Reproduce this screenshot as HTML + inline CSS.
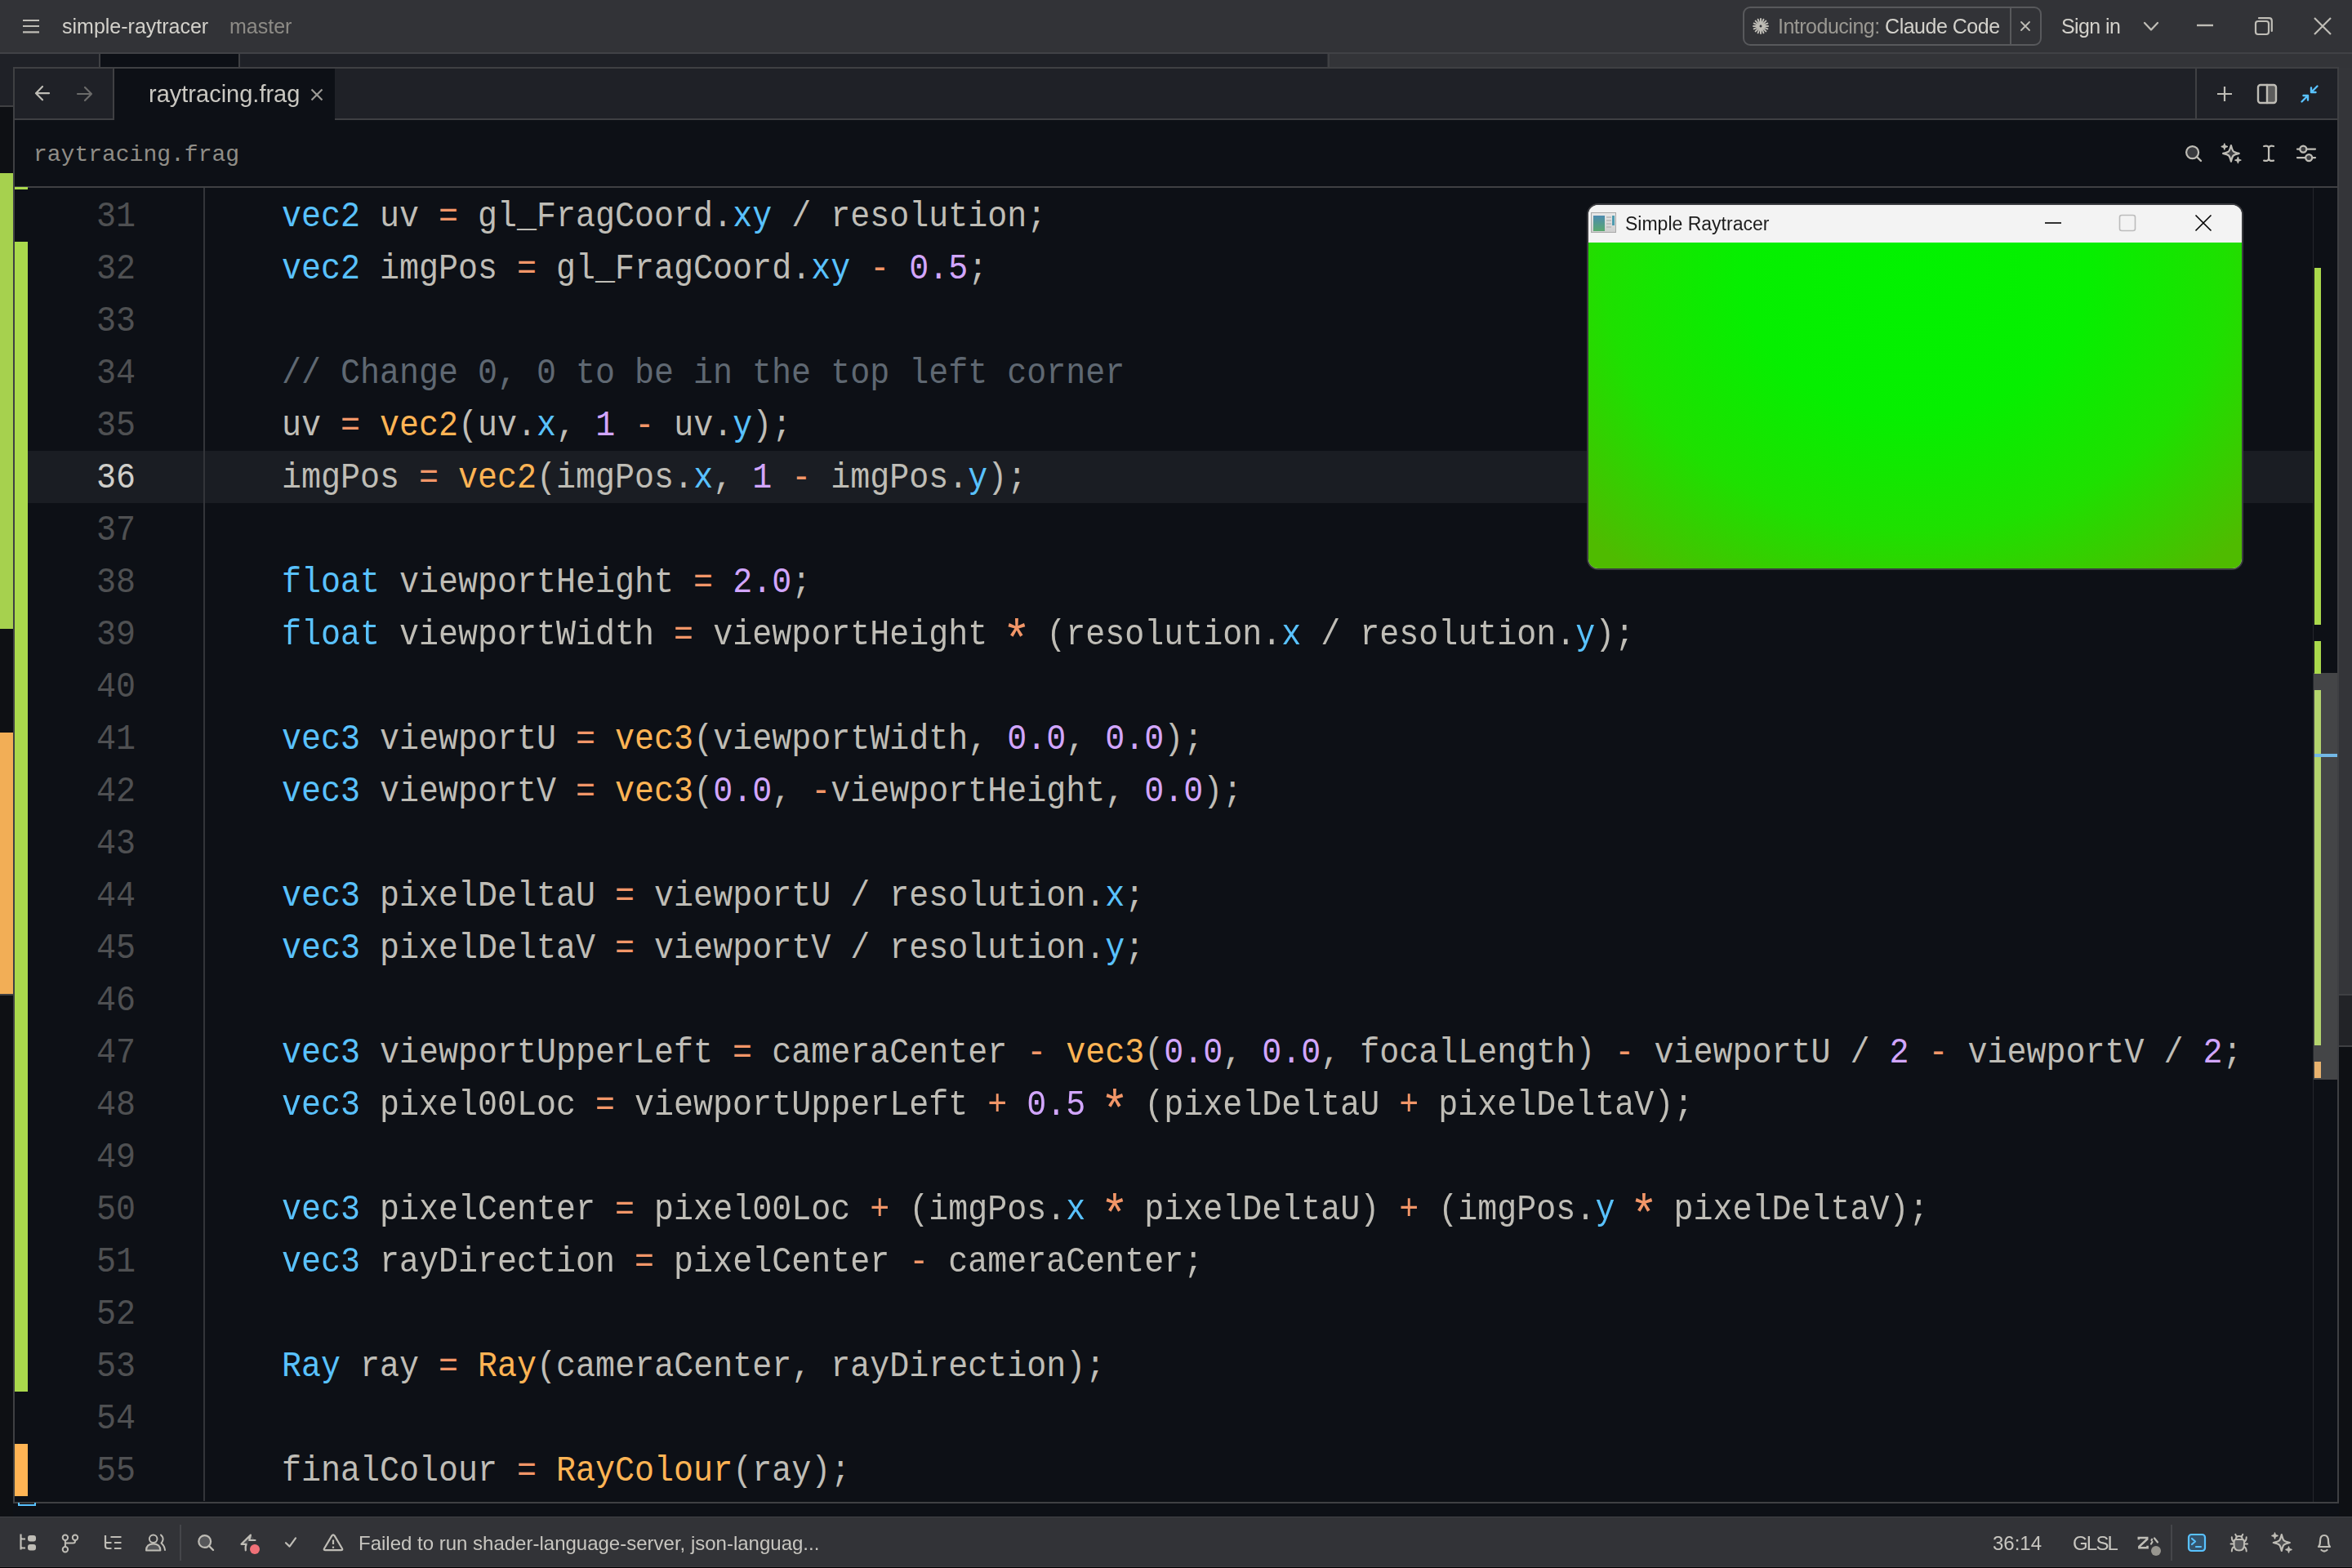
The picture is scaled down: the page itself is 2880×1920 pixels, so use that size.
<!DOCTYPE html><html><head><meta charset="utf-8"><style>*{margin:0;padding:0;box-sizing:border-box}
html,body{width:2880px;height:1920px;overflow:hidden;background:#0d1016}
body{position:relative;font-family:"Liberation Sans",sans-serif;color:#bfbdb6}
.a{position:absolute}
svg.a{overflow:visible}
.ui{font-family:"Liberation Sans",sans-serif;white-space:pre;line-height:1;transform:translateZ(0)}
.mono{font-family:"Liberation Mono",monospace;white-space:pre;line-height:1}
#title{left:0;top:0;width:2880px;height:66px;background:#323337;border-bottom:2px solid #414246}
#proj{left:76px;top:20px;font-size:25px;color:#d3d1cb}
#branch{left:281px;top:20px;font-size:25px;color:#8d8b86}
#claude{left:2134px;top:8px;width:366px;height:48px;border:2px solid #58595c;border-radius:9px}
#claudediv{left:325px;top:0;width:2px;height:44px;background:#58595c}
#intro{letter-spacing:-0.5px;left:2177px;top:20px;font-size:25px;color:#d3d1cb}
#signin{letter-spacing:-0.6px;left:2524px;top:20px;font-size:25px;color:#d3d1cb}

#bgtabs{left:0;top:66px;width:2880px;height:17px;background:linear-gradient(90deg,#1f2127 0,#1f2127 1625px,#3f4043 1626px,#3f4043 1628px,#333438 1628px)}
#bgactive{left:121px;top:66px;width:173px;height:17px;background:#0d1016;border-left:2px solid #3f4043;border-right:2px solid #3f4043}
#lstrip{left:0;top:83px;width:16px;height:1774px;background:linear-gradient(#1f2127 0,#1f2127 46px,#3f4043 46px,#3f4043 48px,#0e1014 48px,#0e1014 129px,#a6d14e 129px,#a6d14e 687px,#0e1014 687px,#0e1014 814px,#f2ae56 814px,#f2ae56 1134px,#3f4043 1134px,#3f4043 1136px,#0e1014 1136px)}
#rstrip{left:2864px;top:83px;width:16px;height:1774px;background:linear-gradient(#343539 0,#343539 1134px,#3f4043 1134px,#3f4043 1136px,#222327 1136px,#222327 1197px,#3f4043 1197px,#3f4043 1199px,#0e1014 1199px)}

#pane{left:16px;top:82px;width:2848px;height:1759px;border:2px solid #3f4043;background:#0d1016}
#tabbar{left:18px;top:84px;width:2844px;height:63px;background:#1f2127;border-bottom:2px solid #3f4043}
#nav{left:18px;top:84px;width:122px;height:63px;border-right:2px solid #3f4043}
#acttab{left:140px;top:84px;width:270px;height:63px;background:#0d1016}
#tabright{left:2688px;top:84px;width:2px;height:61px;background:#3f4043}
#tabtext{left:182px;top:101px;font-size:29px;color:#c9c7c1}
#crumb{left:41px;top:176px;font-size:28px;color:#8f8d87}
#edtop{left:18px;top:228px;width:2844px;height:2px;background:#3f4043}

#activeline{left:34px;top:552px;width:2798px;height:64px;background:#1a1d23}
#indent{left:249px;top:230px;width:2px;height:1608px;background:#33353a}
.gadd{left:18px;width:16px;background:#aad94c}
.gmod{left:18px;width:16px;background:#ffb454}
#sbtrack{left:2832px;top:230px;width:1px;height:1609px;background:#25272c}
#sbthumb{left:2833px;top:824px;width:29px;height:498px;background:#444547}
.sbm{left:2834px;width:8px}
.num{transform:scaleY(1.12);transform-origin:0 15px;left:60px;width:106px;text-align:right;height:64px;line-height:64px;font-size:40px;font-family:"Liberation Mono",monospace;color:#4f5052}
.num.act{color:#d0cfca}
.ln{transform:scaleY(1.12);transform-origin:0 15px;left:249px;height:64px;line-height:64px;font-size:40px;white-space:pre;font-family:"Liberation Mono",monospace;color:#bfbdb6}
.ast{display:inline-block;transform:translateY(9px) scale(1.45)}.t{color:#59c2ff}.o{color:#f29668}.n{color:#d2a6ff}.f{color:#ffb454}.c{color:#5f6872}
#bluemark{left:22px;top:1840px;width:22px;height:4px;border:2px solid #59c2ff;border-top:none}

#win{left:1943px;top:249px;width:804px;height:449px;border:2px solid #3a3b3f;border-radius:14px;overflow:hidden;background:#f3f3f3}
#wintitle{left:0;top:0;width:800px;height:46px;background:#f3f3f3}
#wingreen{left:0;top:46px;width:800px;height:399px;background:radial-gradient(ellipse 70% 118% at 50% 8%,#02f200 0%,#06ef00 38%,#1ee000 68%,#4fbb00 100%)}
#wintext{transform:translateZ(0);left:1990px;top:263px;font-size:23px;color:#1c1c1c;font-family:"Liberation Sans",sans-serif;white-space:pre;line-height:1}

#status{left:0;top:1857px;width:2880px;height:63px;background:#323337;border-top:1px solid #414246}
.sdiv{top:1867px;width:2px;height:44px;background:#45464a}
#failed{left:439px;top:1878px;font-size:24px;color:#c8c6c0}
#pos{left:2440px;top:1878px;font-size:24px;color:#c8c6c0}
#lang{letter-spacing:-1.8px;left:2538px;top:1878px;font-size:24px;color:#c8c6c0}
</style></head><body>
<div class="a" id="title"></div>
<svg class="a" style="left:27px;top:23px" width="22" height="18" viewBox="0 0 22 18" fill="none" stroke="#bfbdb6" stroke-width="2" stroke-linecap="round" stroke-linejoin="round" ><path d="M1 2H21M1 9H21M1 16.4H21" stroke-width="2.2" stroke-linecap="butt"/></svg>
<div class="a ui" id="proj">simple-raytracer</div>
<div class="a ui" id="branch">master</div>
<div class="a" id="claude"><div class="a" id="claudediv"></div></div>
<svg class="a" style="left:2146px;top:22px" width="20" height="20" viewBox="0 0 20 20" fill="none" stroke="#bfbdb6" stroke-width="2" stroke-linecap="round" stroke-linejoin="round" stroke-width="1.5"><line x1="12.50" y1="10.00" x2="19.00" y2="10.00"/><line x1="12.31" y1="10.96" x2="18.31" y2="13.44"/><line x1="11.77" y1="11.77" x2="16.36" y2="16.36"/><line x1="10.96" y1="12.31" x2="13.44" y2="18.31"/><line x1="10.00" y1="12.50" x2="10.00" y2="19.00"/><line x1="9.04" y1="12.31" x2="6.56" y2="18.31"/><line x1="8.23" y1="11.77" x2="3.64" y2="16.36"/><line x1="7.69" y1="10.96" x2="1.69" y2="13.44"/><line x1="7.50" y1="10.00" x2="1.00" y2="10.00"/><line x1="7.69" y1="9.04" x2="1.69" y2="6.56"/><line x1="8.23" y1="8.23" x2="3.64" y2="3.64"/><line x1="9.04" y1="7.69" x2="6.56" y2="1.69"/><line x1="10.00" y1="7.50" x2="10.00" y2="1.00"/><line x1="10.96" y1="7.69" x2="13.44" y2="1.69"/><line x1="11.77" y1="8.23" x2="16.36" y2="3.64"/><line x1="12.31" y1="9.04" x2="18.31" y2="6.56"/></svg>
<div class="a ui" id="intro"><span style="color:#9a9892">Introducing: </span>Claude Code</div>
<svg class="a" style="left:2474px;top:26px" width="12" height="12" viewBox="0 0 12 12" fill="none" stroke="#bfbdb6" stroke-width="2" stroke-linecap="round" stroke-linejoin="round" ><path d="M1 1L11 11M11 1L1 11" stroke-width="1.8"/></svg>
<div class="a ui" id="signin">Sign in</div>
<svg class="a" style="left:2624px;top:26px" width="20" height="13" viewBox="0 0 20 13" fill="none" stroke="#bfbdb6" stroke-width="2" stroke-linecap="round" stroke-linejoin="round" ><path d="M2 2L10 10.5L18 2" stroke-width="2.3"/></svg><svg class="a" style="left:2688px;top:28px" width="24" height="6" viewBox="0 0 24 6" fill="none" stroke="#bfbdb6" stroke-width="2" stroke-linecap="round" stroke-linejoin="round" ><path d="M2 3H22" stroke-width="2.4" stroke-linecap="butt"/></svg><svg class="a" style="left:2760px;top:20px" width="24" height="24" viewBox="0 0 24 24" fill="none" stroke="#bfbdb6" stroke-width="2" stroke-linecap="round" stroke-linejoin="round" ><rect x="2" y="6" width="16" height="16" rx="3" stroke-width="2.2"/><path d="M6 2.2H18.5Q21.8 2.2 21.8 5.5V18" stroke-width="2.2"/></svg><svg class="a" style="left:2832px;top:20px" width="24" height="24" viewBox="0 0 24 24" fill="none" stroke="#bfbdb6" stroke-width="2" stroke-linecap="round" stroke-linejoin="round" ><path d="M2 2L22 22M22 2L2 22" stroke-width="2.2" stroke-linecap="butt"/></svg>
<div class="a" id="bgtabs"></div>
<div class="a" id="bgactive"></div>
<div class="a" id="lstrip"></div>
<div class="a" id="rstrip"></div>
<div class="a" id="pane"></div>
<div class="a" id="tabbar"></div>
<div class="a" id="nav"></div>
<div class="a" id="acttab"></div>
<div class="a" id="tabright"></div>
<svg class="a" style="left:41px;top:103px" width="22" height="22" viewBox="0 0 22 22" fill="none" stroke="#bfbdb6" stroke-width="2" stroke-linecap="round" stroke-linejoin="round" ><path d="M19 11.2H3M11 3L3 11.2L11 19.3" stroke-width="2.2"/></svg><svg class="a" style="left:93px;top:104px" width="22" height="22" viewBox="0 0 22 22" fill="none" stroke="#6b6b6a" stroke-width="2" stroke-linecap="round" stroke-linejoin="round" ><path d="M2 11H19M11 3L19 11L11 19" stroke-width="2.2"/></svg>
<div class="a ui" id="tabtext">raytracing.frag</div>
<svg class="a" style="left:380px;top:108px" width="16" height="16" viewBox="0 0 16 16" fill="none" stroke="#9c9a95" stroke-width="2" stroke-linecap="round" stroke-linejoin="round" ><path d="M1.5 1.5L14.5 14.5M14.5 1.5L1.5 14.5" stroke-width="2.2" stroke-linecap="butt"/></svg>
<svg class="a" style="left:2713px;top:104px" width="22" height="22" viewBox="0 0 22 22" fill="none" stroke="#bfbdb6" stroke-width="2" stroke-linecap="round" stroke-linejoin="round" ><path d="M11 2V20M2 11H20" stroke-width="2.2" stroke-linecap="butt"/></svg><svg class="a" style="left:2763px;top:102px" width="26" height="26" viewBox="0 0 26 26" fill="none" stroke="#bfbdb6" stroke-width="2" stroke-linecap="round" stroke-linejoin="round" ><rect x="13" y="2" width="11" height="22" fill="#5c5c5c" stroke="none"/><rect x="2" y="2" width="22" height="22" rx="3" stroke-width="2.4"/><path d="M13 2V24" stroke-width="2.4"/></svg><svg class="a" style="left:2816px;top:103px" width="24" height="24" viewBox="0 0 24 24" fill="none" stroke="#59c2ff" stroke-width="2" stroke-linecap="round" stroke-linejoin="round" ><path d="M21.5 2.5L14 10M14 4.5V10H19.5M2.5 21.5L10 14M4.5 14H10V19.5" stroke-width="2.4"/></svg>
<div class="a mono" id="crumb">raytracing.frag</div>
<svg class="a" style="left:2674px;top:176px" width="24" height="24" viewBox="0 0 24 24" fill="none" stroke="#bfbdb6" stroke-width="2" stroke-linecap="round" stroke-linejoin="round" ><circle cx="10.6" cy="10.6" r="7.5" fill="#393a3e" stroke-width="2.2"/><path d="M16 16L21 21" stroke-width="2.4"/></svg><svg class="a" style="left:2718px;top:174px" width="28" height="28" viewBox="0 0 28 28" fill="none" stroke="#bfbdb6" stroke-width="2" stroke-linecap="round" stroke-linejoin="round" ><path d="M13.9 4.1C15.9 11.9 15.9 11.9 23.700000000000003 13.9C15.9 15.9 15.9 15.9 13.9 23.700000000000003C11.9 15.9 11.9 15.9 4.1 13.9C11.9 11.9 11.9 11.9 13.9 4.1Z" fill="#3a3b3f" stroke-width="2.2"/><path d="M5.8 1.9C6.5 4.8 6.5 4.8 9.4 5.5C6.5 6.2 6.5 6.2 5.8 9.1C5.1 6.2 5.1 6.2 2.1999999999999997 5.5C5.1 4.8 5.1 4.8 5.8 1.9Z" fill="#bfbdb6" stroke-width="1.3"/><path d="M22.4 18.5C23.099999999999998 21.400000000000002 23.099999999999998 21.400000000000002 26.0 22.1C23.099999999999998 22.8 23.099999999999998 22.8 22.4 25.700000000000003C21.7 22.8 21.7 22.8 18.799999999999997 22.1C21.7 21.400000000000002 21.7 21.400000000000002 22.4 18.5Z" fill="#bfbdb6" stroke-width="1.3"/></svg><svg class="a" style="left:2769px;top:176px" width="18" height="24" viewBox="0 0 18 24" fill="none" stroke="#bfbdb6" stroke-width="2" stroke-linecap="round" stroke-linejoin="round" ><path d="M3.2 3Q9.1 1.6 9.1 6V17.6Q9.1 22 3.2 20.6M15 3Q9.1 1.6 9.1 6M9.1 17.6Q9.1 22 15 20.6" stroke-width="2.3"/></svg><svg class="a" style="left:2810px;top:176px" width="28" height="24" viewBox="0 0 28 24" fill="none" stroke="#bfbdb6" stroke-width="2" stroke-linecap="round" stroke-linejoin="round" ><path d="M3 6.6H6M14.5 6.6H25M3 17.1H13M21.4 17.1H25" stroke-width="2.3"/><circle cx="10.3" cy="6.6" r="4" fill="#393a3e" stroke-width="2.3"/><circle cx="17.2" cy="17.1" r="4" fill="#393a3e" stroke-width="2.3"/></svg>
<div class="a" id="edtop"></div>
<div class="a" id="activeline"></div>
<div class="a" id="indent"></div>
<div class="a gadd" style="top:229px;height:3px"></div>
<div class="a gadd" style="top:296px;height:1408px"></div>
<div class="a gmod" style="top:1768px;height:64px"></div>
<div class="a" id="sbtrack"></div>
<div class="a" id="sbthumb"></div>
<div class="a sbm" style="top:328px;height:437px;background:#aad94c"></div>
<div class="a sbm" style="top:785px;height:40px;background:#aad94c"></div>
<div class="a sbm" style="top:845px;height:435px;background:#b4d46e"></div>
<div class="a sbm" style="top:1300px;height:20px;background:#e8b26e"></div>
<div class="a" style="left:2834px;top:923px;width:28px;height:4px;background:#73b8e6"></div>
<div class="a num" style="top:232px">31</div>
<div class="a ln" style="top:232px">    <span class="t">vec2</span> uv <span class="o">=</span> gl_FragCoord.<span class="t">xy</span> / resolution;</div>
<div class="a num" style="top:296px">32</div>
<div class="a ln" style="top:296px">    <span class="t">vec2</span> imgPos <span class="o">=</span> gl_FragCoord.<span class="t">xy</span> <span class="o">-</span> <span class="n">0.5</span>;</div>
<div class="a num" style="top:360px">33</div>
<div class="a num" style="top:424px">34</div>
<div class="a ln" style="top:424px">    <span class="c">// Change 0, 0 to be in the top left corner</span></div>
<div class="a num" style="top:488px">35</div>
<div class="a ln" style="top:488px">    uv <span class="o">=</span> <span class="f">vec2</span>(uv.<span class="t">x</span>, <span class="n">1</span> <span class="o">-</span> uv.<span class="t">y</span>);</div>
<div class="a num act" style="top:552px">36</div>
<div class="a ln" style="top:552px">    imgPos <span class="o">=</span> <span class="f">vec2</span>(imgPos.<span class="t">x</span>, <span class="n">1</span> <span class="o">-</span> imgPos.<span class="t">y</span>);</div>
<div class="a num" style="top:616px">37</div>
<div class="a num" style="top:680px">38</div>
<div class="a ln" style="top:680px">    <span class="t">float</span> viewportHeight <span class="o">=</span> <span class="n">2.0</span>;</div>
<div class="a num" style="top:744px">39</div>
<div class="a ln" style="top:744px">    <span class="t">float</span> viewportWidth <span class="o">=</span> viewportHeight <span class="o ast">*</span> (resolution.<span class="t">x</span> / resolution.<span class="t">y</span>);</div>
<div class="a num" style="top:808px">40</div>
<div class="a num" style="top:872px">41</div>
<div class="a ln" style="top:872px">    <span class="t">vec3</span> viewportU <span class="o">=</span> <span class="f">vec3</span>(viewportWidth, <span class="n">0.0</span>, <span class="n">0.0</span>);</div>
<div class="a num" style="top:936px">42</div>
<div class="a ln" style="top:936px">    <span class="t">vec3</span> viewportV <span class="o">=</span> <span class="f">vec3</span>(<span class="n">0.0</span>, <span class="o">-</span>viewportHeight, <span class="n">0.0</span>);</div>
<div class="a num" style="top:1000px">43</div>
<div class="a num" style="top:1064px">44</div>
<div class="a ln" style="top:1064px">    <span class="t">vec3</span> pixelDeltaU <span class="o">=</span> viewportU / resolution.<span class="t">x</span>;</div>
<div class="a num" style="top:1128px">45</div>
<div class="a ln" style="top:1128px">    <span class="t">vec3</span> pixelDeltaV <span class="o">=</span> viewportV / resolution.<span class="t">y</span>;</div>
<div class="a num" style="top:1192px">46</div>
<div class="a num" style="top:1256px">47</div>
<div class="a ln" style="top:1256px">    <span class="t">vec3</span> viewportUpperLeft <span class="o">=</span> cameraCenter <span class="o">-</span> <span class="f">vec3</span>(<span class="n">0.0</span>, <span class="n">0.0</span>, focalLength) <span class="o">-</span> viewportU / <span class="n">2</span> <span class="o">-</span> viewportV / <span class="n">2</span>;</div>
<div class="a num" style="top:1320px">48</div>
<div class="a ln" style="top:1320px">    <span class="t">vec3</span> pixel00Loc <span class="o">=</span> viewportUpperLeft <span class="o">+</span> <span class="n">0.5</span> <span class="o ast">*</span> (pixelDeltaU <span class="o">+</span> pixelDeltaV);</div>
<div class="a num" style="top:1384px">49</div>
<div class="a num" style="top:1448px">50</div>
<div class="a ln" style="top:1448px">    <span class="t">vec3</span> pixelCenter <span class="o">=</span> pixel00Loc <span class="o">+</span> (imgPos.<span class="t">x</span> <span class="o ast">*</span> pixelDeltaU) <span class="o">+</span> (imgPos.<span class="t">y</span> <span class="o ast">*</span> pixelDeltaV);</div>
<div class="a num" style="top:1512px">51</div>
<div class="a ln" style="top:1512px">    <span class="t">vec3</span> rayDirection <span class="o">=</span> pixelCenter <span class="o">-</span> cameraCenter;</div>
<div class="a num" style="top:1576px">52</div>
<div class="a num" style="top:1640px">53</div>
<div class="a ln" style="top:1640px">    <span class="t">Ray</span> ray <span class="o">=</span> <span class="f">Ray</span>(cameraCenter, rayDirection);</div>
<div class="a num" style="top:1704px">54</div>
<div class="a num" style="top:1768px">55</div>
<div class="a ln" style="top:1768px">    finalColour <span class="o">=</span> <span class="f">RayColour</span>(ray);</div>
<div class="a" id="bluemark"></div>
<div class="a" id="win"><div class="a" id="wintitle"></div><div class="a" id="wingreen"></div></div>
<div class="a" style="left:1948px;top:260px;width:31px;height:25px;background:linear-gradient(#e8e8e8,#cfcfcf);border:1px solid #a9a9a9"><div class="a" style="left:2px;top:3px;width:14px;height:19px;background:linear-gradient(#4d8bb0,#5aa86f)"></div><div class="a" style="left:18px;top:4px;width:6px;height:16px;background:repeating-linear-gradient(#bfbfbf 0 2px,transparent 2px 4px)"></div><div class="a" style="left:25px;top:3px;width:3px;height:12px;background:#4f9bb0"></div></div>
<div class="a" id="wintext">Simple Raytracer</div>
<svg class="a" style="left:2502px;top:270px" width="24" height="6" viewBox="0 0 24 6" fill="none" stroke="#bfbdb6" stroke-width="2" stroke-linecap="round" stroke-linejoin="round" ><path d="M2 3H22" stroke="#000" stroke-width="1.6" stroke-linecap="butt"/></svg><svg class="a" style="left:2593px;top:261px" width="24" height="24" viewBox="0 0 24 24" fill="none" stroke="#bfbdb6" stroke-width="2" stroke-linecap="round" stroke-linejoin="round" ><rect x="2.5" y="2.5" width="19" height="19" rx="2.5" stroke="#bcbcbc" stroke-width="1.6"/></svg><svg class="a" style="left:2686px;top:261px" width="24" height="24" viewBox="0 0 24 24" fill="none" stroke="#bfbdb6" stroke-width="2" stroke-linecap="round" stroke-linejoin="round" ><path d="M2.5 2.5L21.5 21.5M21.5 2.5L2.5 21.5" stroke="#000" stroke-width="1.6" stroke-linecap="butt"/></svg>
<div class="a" id="status"></div>
<svg class="a" style="left:22px;top:1877px" width="24" height="24" viewBox="0 0 24 24" fill="none" stroke="#bfbdb6" stroke-width="2" stroke-linecap="round" stroke-linejoin="round" ><path d="M3.5 1.5V20.5M3.5 5.5Q3.5 7.5 6 7.5H9M3.5 16.5Q3.5 18.5 6 18.5H9" stroke-width="2.2" stroke-linecap="butt"/><rect x="12" y="3" width="10" height="7.5" rx="3" fill="#bfbdb6" stroke="none"/><rect x="12" y="14" width="10" height="7.5" rx="3" fill="#bfbdb6" stroke="none"/></svg><svg class="a" style="left:74px;top:1877px" width="24" height="26" viewBox="0 0 24 26" fill="none" stroke="#bfbdb6" stroke-width="2" stroke-linecap="round" stroke-linejoin="round" stroke-width="2.1"><circle cx="5.9" cy="5.8" r="3.2"/><circle cx="5.9" cy="20.2" r="3.2"/><circle cx="18" cy="5.8" r="3.2"/><path d="M5.9 9V17M18 9V10Q18 12.5 15.5 12.5H6" /></svg><svg class="a" style="left:126px;top:1877px" width="26" height="24" viewBox="0 0 26 24" fill="none" stroke="#bfbdb6" stroke-width="2" stroke-linecap="round" stroke-linejoin="round" ><path d="M3 3V16Q3 19 6 19H10.5M3 12H10.5M9.5 5H22.5M14 12H22.5M14 19H22.5" stroke-width="2.2" stroke-linecap="butt"/></svg><svg class="a" style="left:177px;top:1877px" width="28" height="24" viewBox="0 0 28 24" fill="none" stroke="#bfbdb6" stroke-width="2" stroke-linecap="round" stroke-linejoin="round" stroke-width="2.2"><circle cx="10.7" cy="7.3" r="4.8"/><path d="M2 21.5Q2 13.5 10.7 13.5Q19.4 13.5 19.4 21.5Z" fill="#555659"/><path d="M20 2.5Q23 5 22.5 8.5Q22 11 20.5 12.5Q24.5 16 25 21" /></svg>
<div class="a sdiv" style="left:220px"></div>
<svg class="a" style="left:240px;top:1877px" width="24" height="24" viewBox="0 0 24 24" fill="none" stroke="#bfbdb6" stroke-width="2" stroke-linecap="round" stroke-linejoin="round" ><circle cx="10.7" cy="10.5" r="7.4" fill="#56575a" stroke-width="2.2"/><path d="M16 16L21 21" stroke-width="2.4"/></svg><svg class="a" style="left:292px;top:1877px" width="28" height="28" viewBox="0 0 28 28" fill="none" stroke="#bfbdb6" stroke-width="2" stroke-linecap="round" stroke-linejoin="round" ><path d="M14.9 2.6L3.5 13.8H9.5Q8 17 8.8 21.3M14.9 2.6L13.2 9H20.5" fill="#4a4b4e" stroke-width="2.2"/><circle cx="20" cy="20" r="6" fill="#f07178" stroke="none"/></svg><svg class="a" style="left:346px;top:1879px" width="20" height="18" viewBox="0 0 20 18" fill="none" stroke="#bfbdb6" stroke-width="2" stroke-linecap="round" stroke-linejoin="round" ><path d="M4 10.2L8.6 14.6L16 4.3" stroke-width="2.2"/></svg><svg class="a" style="left:394px;top:1877px" width="28" height="24" viewBox="0 0 28 24" fill="none" stroke="#bfbdb6" stroke-width="2" stroke-linecap="round" stroke-linejoin="round" ><path d="M12.4 3.4Q14 1.2 15.6 3.4L25 19.2Q26 21.2 23.6 21.2H4.4Q2 21.2 3 19.2Z" stroke-width="2.2"/><path d="M14 8.5V14" stroke-width="2.2" stroke-linecap="butt"/><rect x="12.9" y="16.6" width="2.2" height="2.2" fill="#bfbdb6" stroke="none"/></svg>
<div class="a ui" id="failed">Failed to run shader-language-server, json-languag...</div>
<div class="a ui" id="pos">36:14</div>
<div class="a ui" id="lang">GLSL</div>
<svg class="a" style="left:2615px;top:1878px" width="34" height="30" viewBox="0 0 34 30" fill="none" stroke="#bfbdb6" stroke-width="2" stroke-linecap="round" stroke-linejoin="round" ><path d="M3.8 7.2V5H14.2V6.6L4.4 15.8V17.2H14.6V14.8" stroke-width="2.6" stroke-linecap="butt" stroke-linejoin="miter"/><path d="M19 12.5L20.5 10M19.5 8L20 6.8M23 5.5L27 10.5" stroke-width="2.2"/><circle cx="25" cy="21" r="6" fill="#98968f" stroke="none"/></svg>
<div class="a sdiv" style="left:2658px"></div>
<svg class="a" style="left:2678px;top:1877px" width="24" height="24" viewBox="0 0 24 24" fill="none" stroke="#bfbdb6" stroke-width="2" stroke-linecap="round" stroke-linejoin="round" ><rect x="2" y="2" width="20" height="20" rx="3.5" fill="#34536b" stroke="#59c2ff" stroke-width="2.2"/><path d="M6 7L10 10.5L6 14M11 17H17" stroke="#59c2ff" stroke-width="2.2"/></svg><svg class="a" style="left:2730px;top:1877px" width="24" height="24" viewBox="0 0 24 24" fill="none" stroke="#bfbdb6" stroke-width="2" stroke-linecap="round" stroke-linejoin="round" stroke-width="2.2"><path d="M5.5 10.5Q5.5 8 8 8H15.5Q18 8 18 10.5V14.5Q18 21.5 11.75 21.5Q5.5 21.5 5.5 14.5Z" fill="#56575a"/><path d="M7.8 8Q7.8 4 11.75 4Q15.7 4 15.7 8M7.2 1.8L8.6 4.6M16.3 1.8L14.9 4.6M5.5 10.8Q2.8 9.8 2.8 5.2M18 10.8Q20.7 9.8 20.7 5.2M1.5 13.6H5.5M18 13.6H22M5.5 17.2Q2.8 18.2 2.8 22.6M18 17.2Q20.7 18.2 20.7 22.6" /></svg><svg class="a" style="left:2780px;top:1875px" width="28" height="28" viewBox="0 0 28 28" fill="none" stroke="#bfbdb6" stroke-width="2" stroke-linecap="round" stroke-linejoin="round" ><path d="M13.8 4C15.8 12.0 15.8 12.0 23.8 14C15.8 16.0 15.8 16.0 13.8 24C11.8 16.0 11.8 16.0 3.8000000000000007 14C11.8 12.0 11.8 12.0 13.8 4Z" fill="#4b4c4f" stroke-width="2.2"/><path d="M5.5 1.9C6.2 4.8 6.2 4.8 9.1 5.5C6.2 6.2 6.2 6.2 5.5 9.1C4.8 6.2 4.8 6.2 1.9 5.5C4.8 4.8 4.8 4.8 5.5 1.9Z" fill="#bfbdb6" stroke-width="1.3"/><path d="M22.5 18.9C23.2 21.8 23.2 21.8 26.1 22.5C23.2 23.2 23.2 23.2 22.5 26.1C21.8 23.2 21.8 23.2 18.9 22.5C21.8 21.8 21.8 21.8 22.5 18.9Z" fill="#bfbdb6" stroke-width="1.3"/></svg><svg class="a" style="left:2836px;top:1877px" width="20" height="26" viewBox="0 0 20 26" fill="none" stroke="#bfbdb6" stroke-width="2" stroke-linecap="round" stroke-linejoin="round" ><path d="M3 17Q5 15 5 10Q5 3 10 3Q15 3 15 10Q15 15 17 17Z" stroke-width="2.2"/><path d="M6.5 21Q10 24 13.5 21" stroke-width="2.2"/></svg>
<div class="a" style="left:0;top:1918px;width:2880px;height:1px;background:#3a3b3f"></div><div class="a" style="left:0;top:1919px;width:2880px;height:1px;background:#000"></div>
</body></html>
